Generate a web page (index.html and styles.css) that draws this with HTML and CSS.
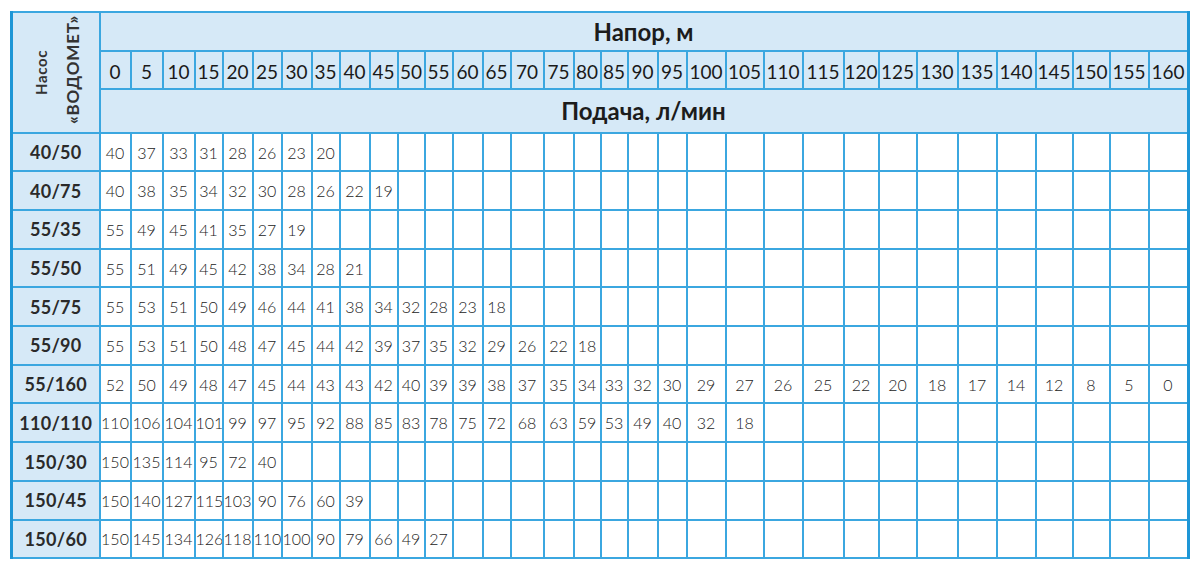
FILE: index.html
```html
<!DOCTYPE html>
<html lang="ru">
<head>
<meta charset="utf-8">
<title>Водомет</title>
<link rel="stylesheet" href="styles.css">
</head>
<body>
<div class="wrap">
<table class="pump-table">
<colgroup>
<col><col><col><col><col><col><col><col><col><col><col><col><col><col><col><col><col><col><col><col><col><col><col><col><col><col><col><col><col><col><col><col><col><col>
</colgroup>
<thead>
<tr class="h1">
<th class="label" rowspan="3"><div class="label-inner"><span class="vt small">Насос</span><span class="vt big">«ВОДОМЕТ»</span></div></th>
<th class="title" colspan="33">Напор, м</th>
</tr>
<tr class="h2">
<th>0</th><th>5</th><th>10</th><th>15</th><th>20</th><th>25</th><th>30</th><th>35</th><th>40</th><th>45</th><th>50</th><th>55</th><th>60</th><th>65</th><th>70</th><th>75</th><th>80</th><th>85</th><th>90</th><th>95</th><th>100</th><th>105</th><th>110</th><th>115</th><th>120</th><th>125</th><th>130</th><th>135</th><th>140</th><th>145</th><th>150</th><th>155</th><th>160</th>
</tr>
<tr class="h3">
<th class="title" colspan="33">Подача, л/мин</th>
</tr>
</thead>
<tbody>
<tr><th>40/50</th><td>40</td><td>37</td><td>33</td><td>31</td><td>28</td><td>26</td><td>23</td><td>20</td><td></td><td></td><td></td><td></td><td></td><td></td><td></td><td></td><td></td><td></td><td></td><td></td><td></td><td></td><td></td><td></td><td></td><td></td><td></td><td></td><td></td><td></td><td></td><td></td><td></td></tr>
<tr><th>40/75</th><td>40</td><td>38</td><td>35</td><td>34</td><td>32</td><td>30</td><td>28</td><td>26</td><td>22</td><td>19</td><td></td><td></td><td></td><td></td><td></td><td></td><td></td><td></td><td></td><td></td><td></td><td></td><td></td><td></td><td></td><td></td><td></td><td></td><td></td><td></td><td></td><td></td><td></td></tr>
<tr><th>55/35</th><td>55</td><td>49</td><td>45</td><td>41</td><td>35</td><td>27</td><td>19</td><td></td><td></td><td></td><td></td><td></td><td></td><td></td><td></td><td></td><td></td><td></td><td></td><td></td><td></td><td></td><td></td><td></td><td></td><td></td><td></td><td></td><td></td><td></td><td></td><td></td><td></td></tr>
<tr><th>55/50</th><td>55</td><td>51</td><td>49</td><td>45</td><td>42</td><td>38</td><td>34</td><td>28</td><td>21</td><td></td><td></td><td></td><td></td><td></td><td></td><td></td><td></td><td></td><td></td><td></td><td></td><td></td><td></td><td></td><td></td><td></td><td></td><td></td><td></td><td></td><td></td><td></td><td></td></tr>
<tr><th>55/75</th><td>55</td><td>53</td><td>51</td><td>50</td><td>49</td><td>46</td><td>44</td><td>41</td><td>38</td><td>34</td><td>32</td><td>28</td><td>23</td><td>18</td><td></td><td></td><td></td><td></td><td></td><td></td><td></td><td></td><td></td><td></td><td></td><td></td><td></td><td></td><td></td><td></td><td></td><td></td><td></td></tr>
<tr><th>55/90</th><td>55</td><td>53</td><td>51</td><td>50</td><td>48</td><td>47</td><td>45</td><td>44</td><td>42</td><td>39</td><td>37</td><td>35</td><td>32</td><td>29</td><td>26</td><td>22</td><td>18</td><td></td><td></td><td></td><td></td><td></td><td></td><td></td><td></td><td></td><td></td><td></td><td></td><td></td><td></td><td></td><td></td></tr>
<tr><th>55/160</th><td>52</td><td>50</td><td>49</td><td>48</td><td>47</td><td>45</td><td>44</td><td>43</td><td>43</td><td>42</td><td>40</td><td>39</td><td>39</td><td>38</td><td>37</td><td>35</td><td>34</td><td>33</td><td>32</td><td>30</td><td>29</td><td>27</td><td>26</td><td>25</td><td>22</td><td>20</td><td>18</td><td>17</td><td>14</td><td>12</td><td>8</td><td>5</td><td>0</td></tr>
<tr><th>110/110</th><td>110</td><td>106</td><td>104</td><td>101</td><td>99</td><td>97</td><td>95</td><td>92</td><td>88</td><td>85</td><td>83</td><td>78</td><td>75</td><td>72</td><td>68</td><td>63</td><td>59</td><td>53</td><td>49</td><td>40</td><td>32</td><td>18</td><td></td><td></td><td></td><td></td><td></td><td></td><td></td><td></td><td></td><td></td><td></td></tr>
<tr><th>150/30</th><td>150</td><td>135</td><td>114</td><td>95</td><td>72</td><td>40</td><td></td><td></td><td></td><td></td><td></td><td></td><td></td><td></td><td></td><td></td><td></td><td></td><td></td><td></td><td></td><td></td><td></td><td></td><td></td><td></td><td></td><td></td><td></td><td></td><td></td><td></td><td></td></tr>
<tr><th>150/45</th><td>150</td><td>140</td><td>127</td><td>115</td><td>103</td><td>90</td><td>76</td><td>60</td><td>39</td><td></td><td></td><td></td><td></td><td></td><td></td><td></td><td></td><td></td><td></td><td></td><td></td><td></td><td></td><td></td><td></td><td></td><td></td><td></td><td></td><td></td><td></td><td></td><td></td></tr>
<tr><th>150/60</th><td>150</td><td>145</td><td>134</td><td>126</td><td>118</td><td>110</td><td>100</td><td>90</td><td>79</td><td>66</td><td>49</td><td>27</td><td></td><td></td><td></td><td></td><td></td><td></td><td></td><td></td><td></td><td></td><td></td><td></td><td></td><td></td><td></td><td></td><td></td><td></td><td></td><td></td><td></td></tr>
</tbody>
</table>
</div>
</body>
</html>
```

FILE: styles.css
```css
html, body {
  margin: 0;
  padding: 0;
  background: #ffffff;
}

body {
  font-family: "Lato", "Noto Sans", sans-serif;
  color: #222;
}

.wrap {
  padding: 11px 0 0 10px;
}

.pump-table {
  border-collapse: collapse;
  table-layout: fixed;
  width: 1178px;
  border-left: 3px solid #1e96d6;
  border-right: 3px solid #1e96d6;
  border-top: 2px solid #56b3e6;
  border-bottom: 2px solid #56b3e6;
}

.pump-table th,
.pump-table td {
  border: 2px solid #3ba7e0;
  padding: 0;
  text-align: center;
  white-space: nowrap;
  overflow: hidden;
}

.pump-table th {
  background: #d6e9f7;
}

/* column widths */
.pump-table col:nth-child(1) { width: 88px; }
.pump-table col:nth-child(2) { width: 31px; }
.pump-table col:nth-child(3) { width: 32px; }
.pump-table col:nth-child(4) { width: 32px; }
.pump-table col:nth-child(5) { width: 28px; }
.pump-table col:nth-child(6) { width: 30px; }
.pump-table col:nth-child(7) { width: 29px; }
.pump-table col:nth-child(8) { width: 30px; }
.pump-table col:nth-child(9) { width: 28px; }
.pump-table col:nth-child(10) { width: 30px; }
.pump-table col:nth-child(11) { width: 28px; }
.pump-table col:nth-child(12) { width: 27px; }
.pump-table col:nth-child(13) { width: 28px; }
.pump-table col:nth-child(14) { width: 30px; }
.pump-table col:nth-child(15) { width: 28px; }
.pump-table col:nth-child(16) { width: 33px; }
.pump-table col:nth-child(17) { width: 30px; }
.pump-table col:nth-child(18) { width: 27px; }
.pump-table col:nth-child(19) { width: 27px; }
.pump-table col:nth-child(20) { width: 30px; }
.pump-table col:nth-child(21) { width: 29px; }
.pump-table col:nth-child(22) { width: 39px; }
.pump-table col:nth-child(23) { width: 38px; }
.pump-table col:nth-child(24) { width: 39px; }
.pump-table col:nth-child(25) { width: 41px; }
.pump-table col:nth-child(26) { width: 35px; }
.pump-table col:nth-child(27) { width: 38px; }
.pump-table col:nth-child(28) { width: 41px; }
.pump-table col:nth-child(29) { width: 39px; }
.pump-table col:nth-child(30) { width: 39px; }
.pump-table col:nth-child(31) { width: 37px; }
.pump-table col:nth-child(32) { width: 37px; }
.pump-table col:nth-child(33) { width: 39px; }
.pump-table col:nth-child(34) { width: 39px; }

/* header rows */
.h1 { height: 38.7px; }
.h2 { height: 38.3px; }
.h3 { height: 43.7px; }

.title {
  font-size: 24px;
  font-weight: 700;
  color: #1c1c1c;
  padding-top: 5px;
}

.h2 th {
  font-size: 19px;
  font-weight: 400;
  color: #1a1a1a;
  padding-top: 3px;
}

/* rotated label */
.label {
  vertical-align: middle;
}

.label-inner {
  display: flex;
  justify-content: center;
  align-items: center;
  gap: 12px;
  padding-left: 3px;
}

.vt {
  writing-mode: vertical-rl;
  transform: rotate(180deg);
  line-height: 20px;
  color: #333;
}

.vt.small {
  font-size: 15px;
  font-weight: 700;
  letter-spacing: 0.6px;
}

.vt.big {
  font-size: 17px;
  font-weight: 700;
  letter-spacing: 0.8px;
  margin-top: -6px;
}

/* body rows */
.pump-table tbody tr {
  height: 38.7px;
}

.pump-table tbody th {
  font-size: 18px;
  font-weight: 700;
  color: #2a2a2a;
  letter-spacing: 0.3px;
}

.pump-table tbody td {
  font-size: 16px;
  font-weight: 300;
  color: #222;
  background: #ffffff;
}
```
